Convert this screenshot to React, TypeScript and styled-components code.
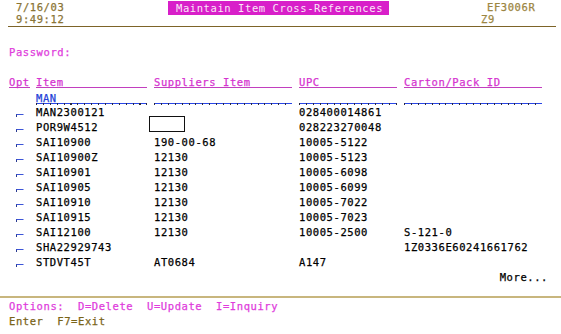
import styled, { createGlobalStyle } from 'styled-components';

const GlobalStyle = createGlobalStyle`
	html, body {
		margin: 0;
		padding: 0;
		background: #ffffff;
	}

	body {
		font-family: 'DejaVu Sans Mono', 'Liberation Mono', monospace;
		font-size: 10.5px;
		letter-spacing: 0.58px;
		color: #000000;
		-webkit-text-stroke: 0.25px currentColor;
	}
`;

const Screen = styled.div`
	width: 561px;
	height: 334px;
	overflow: hidden;
`;

const TopBar = styled.header`
	display: flex;
	align-items: flex-start;
	margin-left: 8px;
	width: 548px;
	padding-top: 1px;
	padding-bottom: 1px;
	border-bottom: 1px solid #7d6428;
`;

const Stamp = styled.div`
	width: 152px;
	padding-left: 8px;
	color: #8a7434;
	line-height: 12px;
`;

const Title = styled.div`
	width: 213px;
	height: 14px;
	padding-left: 8px;
	background: #d81fc9;
	color: #fbe6f8;
	line-height: 14px;
	-webkit-text-stroke: 0;
`;

const Job = styled.div`
	margin-left: 92px;
	display: flex;
	flex-direction: column;
	color: #9c8642;
	line-height: 12px;
`;

const JobLine = styled.span<{ $indent?: number }>`
	padding-left: ${(p) => p.$indent ?? 0}px;
`;

const Body = styled.main`
	padding-left: 9px;
	padding-top: 18px;
`;

const Line = styled.div<{ $colour?: string }>`
	height: 15px;
	line-height: 15px;
	color: ${(p) => p.$colour ?? '#000000'};
	white-space: pre;
`;

const Grid = styled.div`
	display: grid;
	grid-template-columns: 27px 118px 145px 105px 138px;
	height: 15px;
	line-height: 15px;
	white-space: pre;
`;

const HeadCell = styled.div<{ $full?: boolean }>`
	color: #d633d0;
	line-height: 15px;
	height: 12px;
	border-bottom: 1px solid #c23fbf;
	margin-right: ${(p) => (p.$full ? '0' : '7px')};
`;

const OptHead = styled(HeadCell)`
	width: 21px;
`;

const FilterCell = styled.div<{ $last?: boolean }>`
	position: relative;
	color: #2341d8;
	line-height: 17px;
	height: 13px;
	border-bottom: 1px solid #2946e6;
	margin-right: ${(p) => (p.$last ? '0' : '7px')};

	&::after {
		content: '';
		position: absolute;
		left: 0;
		right: 0;
		bottom: -2px;
		height: 2px;
		background-image: repeating-linear-gradient(
			to right,
			#2a2a40 0 1px,
			transparent 1px 6.9px
		);
	}
`;

const Cell = styled.div`
	color: #000000;
`;

const OptMarker = styled.span`
	align-self: end;
	justify-self: start;
	margin-left: 7px;
	margin-bottom: 3px;
	width: 6px;
	height: 2px;
	border-top: 1px solid #3c55d8;
	border-left: 1px solid #2a3a90;
	border-right: 1px solid transparent;
`;

const FieldBox = styled.span`
	display: block;
	width: 34px;
	height: 14px;
	margin: -4px 0 0 -5px;
	border: 1px solid #111;
`;

const MoreLine = styled(Line)`
	width: 539px;
	text-align: right;
`;

const Spacer = styled.div`
	height: 11px;
`;

const Footer = styled.footer`
	width: 556px;
	border-top: 2px solid #c8b67e;
	padding-left: 9px;
	padding-top: 1px;
`;

type Row = {
	item: string;
	supplier?: string;
	upc?: string;
	carton?: string;
	box?: boolean;
};

const rows: Row[] = [
	{ item: 'MAN2300121', upc: '028400014861' },
	{ item: 'POR9W4512', upc: '028223270048', box: true },
	{ item: 'SAI10900', supplier: '190-00-68', upc: '10005-5122' },
	{ item: 'SAI10900Z', supplier: '12130', upc: '10005-5123' },
	{ item: 'SAI10901', supplier: '12130', upc: '10005-6098' },
	{ item: 'SAI10905', supplier: '12130', upc: '10005-6099' },
	{ item: 'SAI10910', supplier: '12130', upc: '10005-7022' },
	{ item: 'SAI10915', supplier: '12130', upc: '10005-7023' },
	{ item: 'SAI12100', supplier: '12130', upc: '10005-2500', carton: 'S-121-0' },
	{ item: 'SHA22929743', carton: '1Z0336E60241661762' },
	{ item: 'STDVT45T', supplier: 'AT0684', upc: 'A147' }
];

const App = () => {
	return (
		<Screen>
			<GlobalStyle />
			<TopBar>
				<Stamp>
					<div>7/16/03</div>
					<div>9:49:12</div>
				</Stamp>
				<Title>Maintain Item Cross-References</Title>
				<Job>
					<JobLine $indent={6}>EF3006R</JobLine>
					<JobLine>Z9</JobLine>
				</Job>
			</TopBar>
			<Body>
				<Line $colour="#e03cdc">Password:</Line>
				<Line />
				<Grid>
					<OptHead>Opt</OptHead>
					<HeadCell>Item</HeadCell>
					<HeadCell>Suppliers Item</HeadCell>
					<HeadCell>UPC</HeadCell>
					<HeadCell $full>Carton/Pack ID</HeadCell>
				</Grid>
				<Grid>
					<div />
					<FilterCell>MAN</FilterCell>
					<FilterCell />
					<FilterCell />
					<FilterCell $last />
				</Grid>
				{rows.map((row) => (
					<Grid key={row.item}>
						<OptMarker />
						<Cell>{row.item}</Cell>
						<Cell>{row.box ? <FieldBox /> : row.supplier}</Cell>
						<Cell>{row.upc}</Cell>
						<Cell>{row.carton}</Cell>
					</Grid>
				))}
				<MoreLine>More...</MoreLine>
			</Body>
			<Spacer />
			<Footer>
				<Line $colour="#e03cdc">Options:  D=Delete  U=Update  I=Inquiry</Line>
				<Line $colour="#7a6418">Enter  F7=Exit</Line>
			</Footer>
		</Screen>
	);
};

export default App;
